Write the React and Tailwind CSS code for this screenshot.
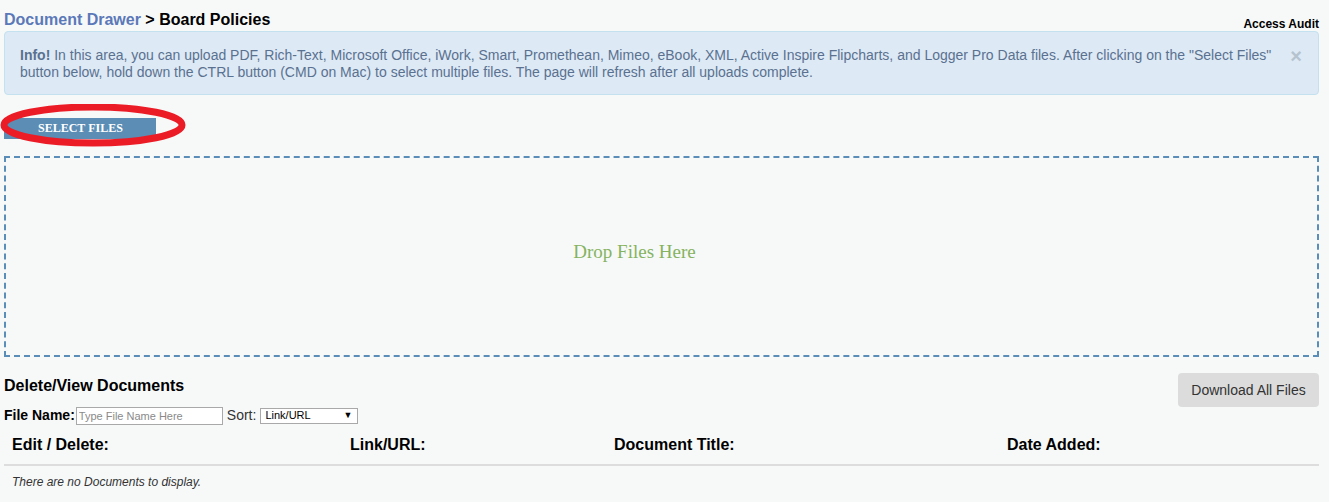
import React from 'react';

const font = { fontFamily: '"Liberation Sans", Arial, sans-serif' };
const serif = { fontFamily: '"Liberation Serif", "Times New Roman", serif' };

const App = () => {
  return (
    <div className="min-h-[502px] w-full bg-[#f7f9f9] text-[#333] pt-[10px] pl-[4px] pr-[10px]" style={font}>
      {/* Breadcrumb */}
      <div className="flex items-end justify-between h-[20px]">
        <div className="text-[16px] font-bold leading-[20px]">
          <span className="text-[#5b78b8]">Document Drawer</span>
          <span className="text-black"> &gt; Board Policies</span>
        </div>
        <div className="text-[12px] font-bold text-black leading-[14px] mb-[-1px]">Access Audit</div>
      </div>

      {/* Info alert */}
      <div className="mt-[1px] h-[64px] rounded-[4px] border border-[#c3e1ee] bg-[#dde9f5] pl-[15px] pr-[40px] pt-[15px] text-[14px] leading-[17px] text-[#5a7190] relative">
        <span className="font-bold">Info!</span> In this area, you can upload PDF, Rich-Text, Microsoft Office, iWork, Smart, Promethean, Mimeo, eBook, XML, Active Inspire Flipcharts, and Logger Pro Data files. After clicking on the "Select Files" button below, hold down the CTRL button (CMD on Mac) to select multiple files. The page will refresh after all uploads complete.
        <span className="absolute right-[16px] top-[14px] text-[20px] font-bold leading-[20px] text-[#b5c3cf]">×</span>
      </div>

      {/* Select files */}
      <div className="relative mt-[20px] h-[21px] w-[181px]">
        <button
          className="h-[21px] w-[152px] bg-[#5b8db5] text-white text-[12px] font-bold leading-[21px] text-left"
          style={serif}
        >
          <span className="ml-[34px]">SELECT FILES</span>
        </button>
        <svg className="absolute left-[-4px] top-[-11px]" width="192" height="44" viewBox="0 0 192 44">
          <ellipse cx="93" cy="21" rx="89" ry="18" fill="none" stroke="#ec1c26" strokeWidth="7" />
        </svg>
      </div>

      {/* Drop zone */}
      <div className="mt-[20px] h-[201px] border-2 border-dashed border-[#5a8db8] flex items-center justify-center pb-[8px] pr-[54px]">
        <span className="text-[19px] text-[#86b35f]" style={serif}>
          Drop Files Here
        </span>
      </div>

      {/* Documents */}
      <div className="mt-[16px] flex items-start justify-between">
        <div>
          <div className="text-[16px] font-bold text-black leading-[20px] mt-[3px]">Delete/View Documents</div>
          <div className="mt-[9px] flex items-center text-[14px] text-black">
            <span className="font-bold">File Name:</span>
            <input
              className="ml-[1px] h-[18px] w-[147px] border border-[#a9a9a9] bg-white px-[2px] text-[11px] placeholder:text-[#8a8a8a] outline-none"
              placeholder="Type File Name Here"
            />
            <span className="ml-[4px] text-[#333]">Sort:</span>
            <div className="ml-[4px] flex h-[16px] w-[98px] items-center justify-between border border-[#a9a9a9] bg-white pl-[4px] pr-[5px] text-[11px] text-black">
              <span>Link/URL</span>
              <span className="text-[9px]">▼</span>
            </div>
          </div>
        </div>
        <button className="h-[34px] w-[141px] rounded-[4px] bg-[#dcdcdc] text-[14px] text-[#333]">
          Download All Files
        </button>
      </div>

      <div className="mt-[4px] flex h-[36px] items-start pt-[3px] border-b-2 border-[#dddddd] text-[16px] font-bold text-black">
        <div className="w-[346px] pl-[8px]">Edit / Delete:</div>
        <div className="w-[264px]">Link/URL:</div>
        <div className="w-[393px]">Document Title:</div>
        <div>Date Added:</div>
      </div>

      <div className="pl-[8px] pt-[7px] text-[12px] italic text-[#333]">There are no Documents to display.</div>
    </div>
  );
};

export default App;
